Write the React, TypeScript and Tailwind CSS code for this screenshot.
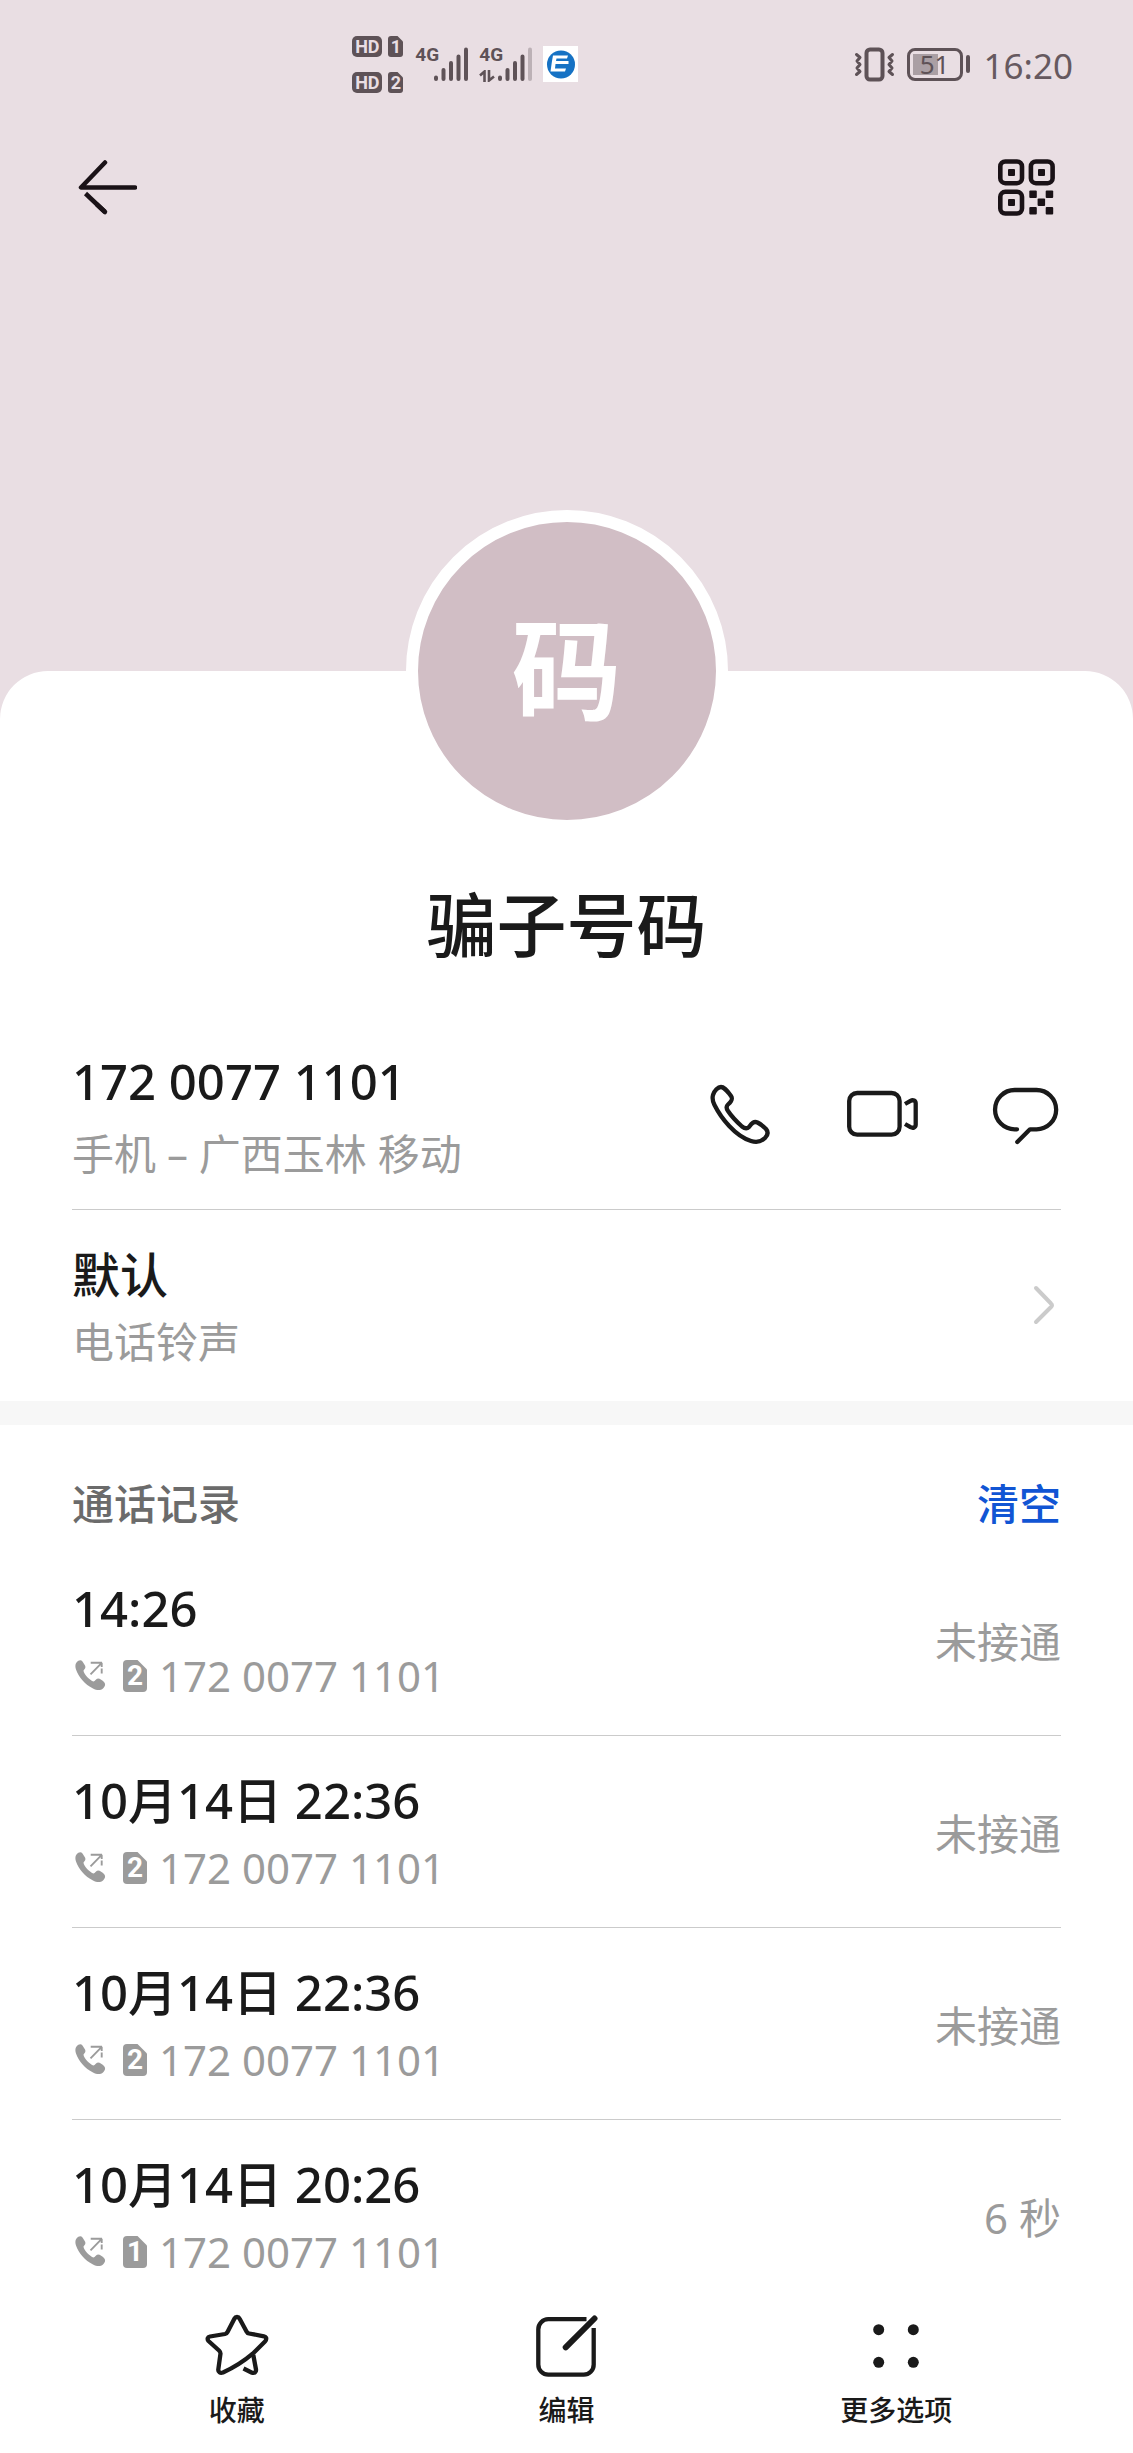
import type { ReactNode } from "react";

type Call = { time: string; number: string; sim: number; status: string };

const calls: Call[] = [
  { time: "14:26", number: "172 0077 1101", sim: 2, status: "未接通" },
  { time: "10月14日 22:36", number: "172 0077 1101", sim: 2, status: "未接通" },
  { time: "10月14日 22:36", number: "172 0077 1101", sim: 2, status: "未接通" },
  { time: "10月14日 20:26", number: "172 0077 1101", sim: 1, status: "6 秒" },
];

function HdBadge({ sim }: { sim: number }) {
  return (
    <div className="flex items-center gap-[6px]">
      <span className="flex h-[21px] w-[30px] items-center justify-center rounded-[5px] bg-[#5e5257] font-['Roboto',sans-serif] text-[18px] leading-[21px] font-bold text-[#e9dee3]">
        HD
      </span>
      <span className="relative flex h-[21px] w-[15px] items-center justify-center">
        <svg className="absolute inset-0" width="15" height="21" viewBox="0 0 15 21" aria-hidden="true">
          <path d="M3 0H9.5L15 5.5V18a3 3 0 0 1-3 3H3a3 3 0 0 1-3-3V3a3 3 0 0 1 3-3Z" fill="#5e5257" />
        </svg>
        <span className="relative font-['Roboto',sans-serif] text-[18px] leading-[21px] font-bold text-[#e9dee3]">{sim}</span>
      </span>
    </div>
  );
}

function Signal({ data, weak }: { data?: boolean; weak?: boolean }) {
  return (
    <div className="flex">
      <div className="flex h-[35px] w-[19px] flex-col justify-between">
        <span className="font-['Liberation_Sans_Narrow','Roboto',sans-serif] text-[19px] leading-[16px] font-bold text-[#5e5257]">4G</span>
        {data && (
          <svg width="17" height="12" viewBox="0 0 17 12" fill="none" stroke="#5e5257" strokeWidth="2.6" aria-hidden="true">
            <path d="M1 5.5 5.5 1.5V12M10 0V10.5L15 6.5" />
          </svg>
        )}
      </div>
      <svg width="35" height="35" viewBox="0 0 35 35" stroke="#5e5257" strokeWidth="4" strokeLinecap="round" aria-hidden="true">
        <path d="M2 30.5V32M9.5 23V32M17 16V32M24.500 9.500V32" />
        <path d="M32 2.500V32" stroke={weak ? "#bcb1b6" : "#5e5257"} />
      </svg>
    </div>
  );
}

function StatusBar() {
  return (
    <div className="flex h-32 items-center justify-between pr-[60px] pl-[31.1%]">
      <div className="flex items-center">
        <div className="flex flex-col gap-[15px]">
          <HdBadge sim={1} />
          <HdBadge sim={2} />
        </div>
        <div className="ml-3 flex items-center gap-[10px]">
          <Signal />
          <Signal data weak />
          <svg width="35" height="36" viewBox="0 0 35 36" aria-hidden="true">
            <rect width="35" height="36" fill="#fff" />
            <circle cx="18" cy="18.500" r="14" fill="#1672c4" />
            <path d="M10 9.500H25L24 12.500H13.500L13 15H25.500V18H12.500L12 22.500H23L22 25.500H7.500L9 15Z" fill="#fff" />
          </svg>
        </div>
      </div>
      <div className="flex items-center">
        <svg width="44" height="39" viewBox="0 0 44 39" fill="none" stroke="#5e5257" strokeLinejoin="round" strokeLinecap="round" aria-hidden="true">
          <rect x="12.500" y="4.500" width="16" height="30" rx="3.500" strokeWidth="4" />
          <path d="M2.500 9.500 6 12.500 3 16 6 19.500 3 23 6 26.500 2.500 29.500M38.500 9.500 35 12.500 38 16 35 19.500 38 23 35 26.500 38.500 29.500" strokeWidth="3" />
        </svg>
        <div className="ml-[9px] flex h-[33px] w-14 items-center justify-center rounded-[8px] border-[3px] border-[#5e5257] bg-[linear-gradient(#aa9fa4,#aa9fa4)] bg-[length:25px_21px] bg-[position:3px_center] bg-no-repeat">
          <span className="font-['Noto_Sans',sans-serif] text-[26px] leading-[27px] text-[#5e5257]">51</span>
        </div>
        <span className="ml-[3px] h-[18px] w-1 rounded-sm bg-[#5e5257]" />
        <span className="ml-[14px] pt-1 text-[35px] leading-[40px] text-[#66595f]">16:20</span>
      </div>
    </div>
  );
}

function IconButton({ label, children }: { label: string; children: ReactNode }) {
  return (
    <button type="button" aria-label={label} className="shrink-0">
      {children}
    </button>
  );
}

function BackIcon() {
  return (
    <svg width="60" height="60" viewBox="0 0 60 60" fill="none" stroke="#1a1217" strokeWidth="4.500" strokeLinecap="round" aria-hidden="true">
      <path d="M28 5.500 4 30.500H58" strokeLinejoin="round" />
      <path d="M8.500 36.500 28 55" strokeLinecap="butt" />
      <path d="M20 47.500 28 55" />
    </svg>
  );
}

function QrIcon() {
  return (
    <svg width="60" height="60" viewBox="0 0 60 60" aria-hidden="true">
      <g fill="none" stroke="#1a1217" strokeWidth="4.600">
        <rect x="4.300" y="4.500" width="21.700" height="21.700" rx="5" />
        <rect x="34.900" y="4.500" width="21.700" height="21.700" rx="5" />
        <rect x="4.300" y="34.800" width="21.700" height="21.700" rx="5" />
      </g>
      <g fill="#1a1217">
        <rect x="12" y="12" width="7" height="7" rx="1" />
        <rect x="42" y="12" width="7" height="7" rx="1" />
        <rect x="12" y="42" width="7" height="7" rx="1" />
        <rect x="33.300" y="33.500" width="7.500" height="7.500" rx="1" />
        <rect x="49.700" y="33.500" width="7.500" height="7.500" rx="1" />
        <rect x="41.600" y="41.500" width="7.500" height="7.500" rx="1" />
        <rect x="33.300" y="50" width="7.500" height="7.500" rx="1" />
        <rect x="49.700" y="50" width="7.500" height="7.500" rx="1" />
      </g>
    </svg>
  );
}

function LineIcon({ children }: { children: ReactNode }) {
  return (
    <svg width="72" height="72" viewBox="0 0 72 72" fill="none" stroke="#1a1a1a" strokeWidth="4.300" strokeLinecap="round" strokeLinejoin="round" aria-hidden="true">
      {children}
    </svg>
  );
}

function OutgoingIcon() {
  return (
    <svg width="32" height="32" viewBox="0 0 32 32" aria-hidden="true">
      <path
        d="M1.500 2.500C3.500 0 6 -.5 7.500 1.500L10 5.500C11 7.500 10 9 8.500 10.500C8.500 14 15 20.500 18.500 21.500C20 21 21 19 23 18.500C25 18.500 27.500 20.500 29 22C31 24 30 26.500 28 28.500C25.500 30.500 22 30.500 18 28.500C10 24.500 3.500 17 1 9.500C0 6.500 .2 4.200 1.500 2.500Z"
        fill="#9b9b9b"
      />
      <path d="M15.500 14.300 26.500 3.200M15.700 2.700H27M26.700 2.700V7M26.700 8.500V13.500" fill="none" stroke="#9b9b9b" strokeWidth="1.900" />
    </svg>
  );
}

function SimIcon({ sim }: { sim: number }) {
  return (
    <span className="relative flex h-8 w-6 items-center justify-center">
      <svg className="absolute inset-0" width="24" height="32" viewBox="0 0 24 32" aria-hidden="true">
        <path d="M4 0H14.500L24 9.500V28a4 4 0 0 1-4 4H4a4 4 0 0 1-4-4V4a4 4 0 0 1 4-4Z" fill="#9b9b9b" />
      </svg>
      <span className="relative font-['Roboto',sans-serif] text-[28px] leading-[32px] font-bold text-white">{sim}</span>
    </span>
  );
}

function CallRow({ call, last }: { call: Call; last: boolean }) {
  return (
    <li className={last ? "flex h-48 items-center justify-between pt-1" : "flex h-48 items-center justify-between border-b border-[#cbcbcb] pt-1"}>
      <div>
        <p className="text-[49px] leading-[60px] font-medium text-[#1a1a1a]">{call.time}</p>
        <p className="mt-2 flex items-center text-[42px] leading-[60px] text-[#9b9b9b]">
          <span className="mr-3 ml-[3px] flex items-center gap-4">
            <OutgoingIcon />
            <SimIcon sim={call.sim} />
          </span>
          {call.number}
        </p>
      </div>
      <span className="text-[42px] leading-[56px] text-[#9b9b9b]">{call.status}</span>
    </li>
  );
}

function TabButton({ label, children }: { label: string; children: ReactNode }) {
  return (
    <button type="button" className="flex flex-col items-center gap-[14px]">
      <svg width="64" height="64" viewBox="0 0 64 64" fill="none" stroke="#1a1a1a" strokeWidth="4.300" strokeLinecap="round" strokeLinejoin="round" aria-hidden="true">
        {children}
      </svg>
      <span className="text-[28px] leading-9 font-medium text-[#1a1a1a]">{label}</span>
    </button>
  );
}

export default function App() {
  return (
    <div lang="zh-CN" className="flex min-h-screen flex-col bg-[#e9dee3] font-['Noto_Sans','Noto_Sans_CJK_SC',sans-serif]">
      <header>
        <StatusBar />
        <nav className="flex h-[118px] items-center justify-between px-[77px]">
          <IconButton label="返回"><BackIcon /></IconButton>
          <IconButton label="二维码"><QrIcon /></IconButton>
        </nav>
      </header>

      <main className="mt-[425px] flex grow flex-col rounded-t-[48px] bg-white">
        <div className="-mt-[161px] flex flex-col items-center">
          <div className="flex size-[322px] items-center justify-center rounded-full border-[12px] border-white bg-[#d1bec5] pb-1 text-[110px] leading-[120px] font-bold text-white">
            码
          </div>
          <h1 className="mt-[49px] text-[70px] leading-[88px] font-medium text-[#1a1a1a]">骗子号码</h1>
        </div>

        <section className="px-[72px] pt-[84px]">
          <div className="flex items-center justify-between border-b border-[#cbcbcb] pb-[27px]">
            <div>
              <p className="text-[49px] leading-[56px] font-medium text-[#1a1a1a]">172 0077 1101</p>
              <p className="mt-[17px] text-[42px] leading-[56px] text-[#9b9b9b]">手机 – 广西玉林 移动</p>
            </div>
            <div className="flex gap-[71px]">
              <IconButton label="呼叫">
                <LineIcon>
                  <path d="M10 13C11.500 8.500 15 5 18 5C21 5 26 11 28 14C30 17 29 19 25 22.500C22.800 24.500 23.300 26.500 25 29C29 35 34 40 39 44.500C41.500 46.500 44 47 46 45C49 41 51 39 54.500 40.500C57.500 42 61 45 63 47C65.500 50 65 53 62 56C58 60 54 61 48 59C32 54 18 36 11.500 23C9.500 19 9 16.500 10 13Z" />
                </LineIcon>
              </IconButton>
              <IconButton label="视频通话">
                <LineIcon>
                  <rect x="3.200" y="11" width="50.400" height="41.700" rx="8" />
                  <path d="M59 22 64.500 18.800C67 17.500 69.700 18.500 69.700 21.500V42.500C69.700 45.500 67 46.500 64.500 45.200L59 42" strokeLinecap="butt" />
                </LineIcon>
              </IconButton>
              <IconButton label="短信">
                <LineIcon>
                  <path d="M28 47.300H25.700A19.650 19.650 0 0 1 25.700 8H47.500A19.650 19.650 0 0 1 47.500 47.300H41L28.300 60" />
                </LineIcon>
              </IconButton>
            </div>
          </div>

          <button type="button" className="flex w-full items-center justify-between pt-[37px] pb-[31px] text-left">
            <span className="flex flex-col gap-[11px]">
              <span className="text-[48px] leading-[56px] font-medium text-[#1a1a1a]">默认</span>
              <span className="text-[42px] leading-[56px] text-[#9b9b9b]">电话铃声</span>
            </span>
            <svg width="28" height="48" viewBox="0 0 28 48" fill="none" stroke="#cbcbcb" strokeWidth="4" strokeLinecap="round" strokeLinejoin="round" aria-hidden="true">
              <path d="M3 3 18 18.500Q20 20 18 22L3 37" />
            </svg>
          </button>
        </section>

        <div className="h-6 bg-[#f7f7f7]" />

        <section className="px-[72px]">
          <div className="flex h-[119px] items-end justify-between pb-3">
            <h2 className="text-[42px] leading-[56px] font-medium text-[#6b6b6b]">通话记录</h2>
            <button type="button" className="text-[42px] leading-[56px] font-medium text-[#1155d4]">清空</button>
          </div>
          <ul>
            {calls.map((call, i) => (
              <CallRow key={i} call={call} last={i === calls.length - 1} />
            ))}
          </ul>
        </section>

        <footer className="grid grid-cols-3 px-[72px] pt-[2px] pb-5">
          <TabButton label="收藏">
            <path d="M61 23.500C61.500 25 61 26.500 60 27.500L47.700 39.700C38 48 28 54 18 58.500C15 59.500 13 58 13.300 55.500L15.500 39.500C15.500 38 15 37.500 14 36.500L3.500 27C2 25 2.500 23 5 22.500L20 20C21.300 19.700 22 19 22.500 18L29.500 4.500C30.500 2.500 33.500 2.500 34.500 4.500L41.500 17.500C42 18.500 43 19.300 44 19.500L59 22.300C60 22.500 60.700 22.800 61 23.500Z" />
            <path d="M48.300 41 51 55.500C51.300 58 49.500 59.500 47 58.700L38.500 54.500" strokeLinecap="butt" />
          </TabButton>
          <TabButton label="编辑">
            <path d="M52.500 5.200H14.500A10 10 0 0 0 4.300 15.500V50.500A10 10 0 0 0 14.500 60.700H49.500A10 10 0 0 0 59.700 50.500V14" strokeLinecap="butt" />
            <path d="M60.500 4.500 31.700 33.300" strokeWidth="6" />
          </TabButton>
          <TabButton label="更多选项">
            <g fill="#1a1a1a" stroke="none">
              <circle cx="14.700" cy="15.700" r="5.500" />
              <circle cx="49.300" cy="15.700" r="5.500" />
              <circle cx="14.700" cy="48.300" r="5.500" />
              <circle cx="49.300" cy="48.300" r="5.500" />
            </g>
          </TabButton>
        </footer>
      </main>
    </div>
  );
}
